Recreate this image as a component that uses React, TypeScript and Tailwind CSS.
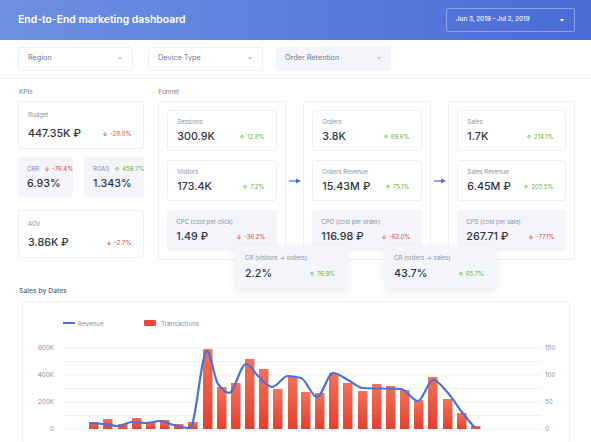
import React from 'react';
import { ArrowUp, ArrowDown } from 'lucide-react';

const font = { fontFamily: 'Inter, "Noto Sans", sans-serif' };

function Change({ v }: { v: string }) {
  const up = !v.startsWith('-');
  return (
    <span
      className={`flex items-center gap-[2px] text-[6px] leading-none ${up ? 'text-[#5fb33a]' : 'text-[#e2443a]'}`}
    >
      {up ? <ArrowUp size={6} strokeWidth={3} /> : <ArrowDown size={6} strokeWidth={3} />}
      {v}
    </span>
  );
}

function Card({
  label,
  value,
  change,
  tint,
  h = 'h-[41px]',
  gap = 'mt-[6px]',
}: {
  label: string;
  value: string;
  change: string;
  tint?: boolean;
  h?: string;
  gap?: string;
}) {
  return (
    <div
      className={`${h} flex flex-col justify-center rounded-[3px] pl-[9px] pr-[12px] ${
        tint ? 'bg-[#f4f5fb]' : 'border border-[#eef0f5] bg-white'
      }`}
    >
      <div className="text-[6px] leading-[8px] text-[#8a8fa3]">{label}</div>
      <div className={`${gap} flex items-center justify-between`}>
        <span className="text-[10.7px] font-medium leading-none text-[#2f3345]">{value}</span>
        <Change v={change} />
      </div>
    </div>
  );
}

function Select({ label, tint }: { label: string; tint?: boolean }) {
  return (
    <div
      className={`flex h-[24px] w-[115px] items-center justify-between rounded-[3px] pl-[9px] pr-[10px] text-[7.3px] text-[#6f7487] ${
        tint ? 'bg-[#f4f5fb]' : 'border border-[#eef0f5] bg-white'
      }`}
    >
      {label}
      <span className="h-0 w-0 border-x-[2.5px] border-t-[3px] border-x-transparent border-t-[#c3c7d3]" />
    </div>
  );
}

function Arrow() {
  return (
    <div className="flex w-[17px] items-center justify-center">
      <svg width="14" height="6" viewBox="0 0 14 6">
        <line x1="1" y1="3" x2="9" y2="3" stroke="#4f6fd6" strokeWidth="1.2" />
        <path d="M8 0.5 L13 3 L8 5.5 Z" fill="#4f6fd6" />
      </svg>
    </div>
  );
}

const bars: [number, number][] = [
  [88, 7], [102, 10], [117, 5], [131, 11], [145, 7], [159, 9], [173, 5], [187, 7],
  [202, 80], [216, 42], [230, 46], [244, 70], [258, 60], [272, 40], [287, 52],
  [300, 37], [314, 36], [328, 56], [342, 46], [357, 38], [371, 45], [385, 43],
  [399, 39], [413, 29], [427, 52], [442, 30], [456, 16], [470, 3],
];

const line: [number, number][] = [
  [88, 423], [102, 424], [117, 426], [131, 422], [145, 423], [159, 421], [173, 425],
  [189, 428], [206, 351], [217, 384], [228, 393], [245, 364], [258, 377], [271, 387],
  [287, 376], [300, 378], [316, 397], [332, 373], [347, 380], [362, 388], [400, 389],
  [417, 401], [432, 380], [447, 393], [460, 411], [474, 428],
];

// monotone cubic, no overshoot between points
function monotone(p: [number, number][]) {
  const n = p.length;
  const dx: number[] = [];
  const s: number[] = [];
  for (let i = 0; i < n - 1; i++) {
    dx.push(p[i + 1][0] - p[i][0]);
    s.push((p[i + 1][1] - p[i][1]) / dx[i]);
  }
  const t: number[] = [s[0]];
  for (let i = 1; i < n - 1; i++) {
    if (s[i - 1] * s[i] <= 0) t.push(0);
    else {
      const a = (dx[i - 1] + 2 * dx[i]) / 3 / (dx[i - 1] + dx[i]);
      const b = 1 - a;
      t.push((s[i - 1] * s[i]) / (a * s[i] + b * s[i - 1]));
    }
  }
  t.push(s[n - 2]);
  let d = `M${p[0][0]},${p[0][1]}`;
  for (let i = 0; i < n - 1; i++) {
    const h = dx[i] / 3;
    d += ` C${p[i][0] + h},${p[i][1] + t[i] * h} ${p[i + 1][0] - h},${p[i + 1][1] - t[i + 1] * h} ${p[i + 1][0]},${p[i + 1][1]}`;
  }
  return d;
}

function Chart() {
  const grid = [348, 361.5, 375, 388.5, 402, 415.5, 429];
  return (
    <svg className="block" width="547" height="140" viewBox="22 302 547 140">
      <defs>
        <linearGradient id="bar" x1="0" y1="0" x2="0" y2="1">
          <stop offset="0" stopColor="#f0735a" />
          <stop offset="1" stopColor="#e1412f" />
        </linearGradient>
      </defs>
      <line x1="62" y1="323" x2="74" y2="323" stroke="#4f6fd6" strokeWidth="2" />
      <text x="77" y="325.5" fontSize="6.3" fill="#8a8fa3" style={font}>Revenue</text>
      <rect x="143" y="320" width="12" height="6" rx="1" fill="#e8493a" />
      <text x="160" y="325.5" fontSize="6.3" fill="#8a8fa3" style={font}>Transactions</text>
      {grid.map((y) => (
        <line key={y} x1="62" y1={y} x2="540" y2={y} stroke="#f0f1f5" strokeWidth="1" />
      ))}
      {[
        ['600K', '150', 348],
        ['400K', '100', 375],
        ['200K', '50', 402],
        ['0', '0', 429],
      ].map(([l, r, y]) => (
        <g key={l as string}>
          <text x="53" y={(y as number) + 2.2} fontSize="6.3" fill="#8a8fa3" textAnchor="end" style={font}>
            {l}
          </text>
          <text x="544" y={(y as number) + 2.2} fontSize="6.3" fill="#8a8fa3" style={font}>
            {r}
          </text>
        </g>
      ))}
      {bars.map(([x, h]) => (
        <rect key={x} x={x} y={429 - h} width="9.5" height={h} fill="url(#bar)" />
      ))}
      <path d={monotone(line)} fill="none" stroke="#4f6fd6" strokeWidth="2.2" strokeLinejoin="round" />
    </svg>
  );
}

function Mini({ label, value, change }: { label: string; value: string; change: string }) {
  return (
    <div className="flex h-[40px] flex-1 flex-col justify-center rounded-[3px] bg-[#f4f5fb] pl-[9px]">
      <div className="flex items-center gap-[5px] text-[6px] leading-[8px] text-[#8a8fa3]">
        {label} <Change v={change} />
      </div>
      <div className="mt-[6px] text-[10.7px] font-medium leading-none text-[#2f3345]">{value}</div>
    </div>
  );
}

export default function App() {
  return (
    <div className="relative h-[442px] w-[591px] overflow-hidden bg-white" style={font}>
      <header className="flex h-[40px] items-center justify-between bg-gradient-to-r from-[#6d90e2] to-[#4a6cd7] pl-[18px] pr-[16px]">
        <h1 className="text-[10.4px] font-semibold text-white">End-to-End marketing dashboard</h1>
        <div className="flex h-[24px] w-[129px] items-center justify-between rounded-[2px] border border-white/35 pl-[9px] pr-[10px] text-[6.3px] font-medium text-white">
          Jun 3, 2019 - Jul 2, 2019
          <span className="h-0 w-0 border-x-[2.5px] border-t-[3px] border-x-transparent border-t-white" />
        </div>
      </header>

      <div className="flex h-[39px] items-center border-b border-[#f0f1f5] px-[18px] pb-[1px]">
        <Select label="Region" />
        <div className="ml-[15px]">
          <Select label="Device Type" />
        </div>
        <div className="ml-[13px]">
          <Select label="Order Retention" tint />
        </div>
      </div>

      <div className="flex px-[18px]">
        <section className="w-[127px]">
          <div className="flex h-[22px] items-end pb-[3px] pl-[1px] text-[6.5px] text-[#6f7487]">KPIs</div>
          <Card label="Budget" value="447.35K ₽" change="-28.0%" h="h-[48px]" gap="mt-[10px]" />
          <div className="mt-[8px] flex gap-[11px]">
            <Mini label="CRR" value="6.93%" change="-76.4%" />
            <Mini label="ROAS" value="1.343%" change="459.7%" />
          </div>
          <div className="mt-[13px]">
            <Card label="AOV" value="3.86K ₽" change="-2.7%" h="h-[48px]" gap="mt-[10px]" />
          </div>
        </section>

        <section className="ml-[14px] flex-1">
          <div className="flex h-[22px] items-end pb-[3px] text-[6.5px] text-[#6f7487]">Funnel</div>
          <div className="flex">
            <div className="flex w-[128px] flex-col gap-[9px] rounded-[3px] border border-[#eef0f5] p-[8px]">
              <Card label="Sessions" value="300.9K" change="12.8%" />
              <Card label="Visitors" value="173.4K" change="7.2%" />
              <Card label="CPC (cost per click)" value="1.49 ₽" change="-36.2%" tint />
            </div>
            <Arrow />
            <div className="flex w-[128px] flex-col gap-[9px] rounded-[3px] border border-[#eef0f5] p-[8px]">
              <Card label="Orders" value="3.8K" change="89.6%" />
              <Card label="Orders Revenue" value="15.43M ₽" change="75.1%" />
              <Card label="CPO (cost per order)" value="116.98 ₽" change="-62.0%" tint />
            </div>
            <Arrow />
            <div className="flex w-[127px] flex-col gap-[9px] rounded-[3px] border border-[#eef0f5] p-[8px]">
              <Card label="Sales" value="1.7K" change="214.1%" />
              <Card label="Sales Revenue" value="6.45M ₽" change="205.5%" />
              <Card label="CPS (cost per sale)" value="267.71 ₽" change="-77.1%" tint />
            </div>
          </div>
        </section>
      </div>

      <div className="absolute left-[236px] top-[246px] w-[111px] rounded-[3px] bg-[#f7f8fc] shadow-[0_3px_10px_rgba(60,70,120,0.12)]">
        <Card label="CR (visitors → orders)" value="2.2%" change="76.9%" tint h="h-[42px]" gap="mt-[7px]" />
      </div>
      <div className="absolute left-[385px] top-[246px] w-[111px] rounded-[3px] bg-[#f7f8fc] shadow-[0_3px_10px_rgba(60,70,120,0.12)]">
        <Card label="CR (orders → sales)" value="43.7%" change="65.7%" tint h="h-[42px]" gap="mt-[7px]" />
      </div>

      <div className="px-[18px] pt-[26px]">
        <div className="pl-[1px] text-[6.8px] font-medium text-[#5f6477]">Sales by Dates</div>
        <div className="ml-[4px] mt-[5px] w-[548px] rounded-[3px] border border-[#eef0f5]">
          <Chart />
        </div>
      </div>
    </div>
  );
}
